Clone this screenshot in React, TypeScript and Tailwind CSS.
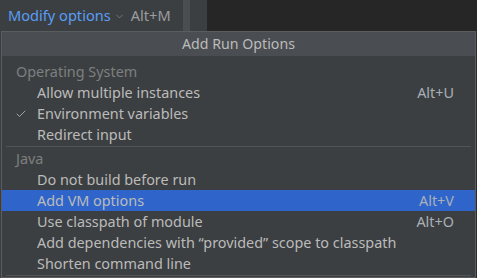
import { ChevronDown, Check } from "lucide-react";

type Item = { label: string; shortcut?: string; checked?: boolean; selected?: boolean };

const osItems: Item[] = [
  { label: "Allow multiple instances", shortcut: "Alt+U" },
  { label: "Environment variables", checked: true },
  { label: "Redirect input" },
];

const javaItems: Item[] = [
  { label: "Do not build before run" },
  { label: "Add VM options", shortcut: "Alt+V", selected: true },
  { label: "Use classpath of module", shortcut: "Alt+O" },
  { label: "Add dependencies with \u201cprovided\u201d scope to classpath" },
  { label: "Shorten command line" },
];

function Row({ item }: { item: Item }) {
  return (
    <div
      className={`h-[21px] flex items-center pr-[21px] ${
        item.selected ? "bg-[#2f65ca] text-[#bbbbbb]" : "text-[#bbbbbb]"
      }`}
    >
      <div className="w-[35px] flex justify-end pr-[10px]">
        {item.checked && <Check size={12} strokeWidth={1.6} className="text-[#bbbbbb]" />}
      </div>
      <span className="flex-1">{item.label}</span>
      {item.shortcut && <span className="text-[#a9b0b8]">{item.shortcut}</span>}
    </div>
  );
}

function Group({ title, items }: { title: string; items: Item[] }) {
  return (
    <div>
      <div className="h-[21px] flex items-center pl-[14px] text-[#7d7f80]">{title}</div>
      {items.map((it) => (
        <Row key={it.label} item={it} />
      ))}
    </div>
  );
}

export default function App() {
  return (
    <div
      className="w-[477px] h-[278px] overflow-hidden bg-[#2b2b2b] flex flex-col text-[14.4px]"
      style={{ fontFamily: '"Noto Sans", "DejaVu Sans", sans-serif' }}
    >
      {/* ツールバー */}
      <div className="h-[31px] flex shrink-0">
        <div className="w-[183px] bg-[#3c3f41] flex items-center pl-[8px] gap-[3px]">
          <span className="text-[#589df6] text-[14.6px]">Modify options</span>
          <ChevronDown size={11} strokeWidth={1.5} className="text-[#8b8e90] mt-[1px]" />
          <span className="text-[#9a9da0] text-[14.6px] ml-[3px]">Alt+M</span>
        </div>
        <div className="w-[7px] bg-[#4b4e50]" />
        <div className="w-[17px] bg-[#3c3f41]" />
        <div className="flex-1 bg-[#262626]" />
      </div>

      {/* ポップアップ */}
      <div className="flex flex-1">
        <div className="w-[1px] bg-[#3c3f41]" />
        <div className="w-[475px] border border-[#5a5d5f] bg-[#3c3f41] flex flex-col">
          <div className="h-[24px] bg-[#4a4d51] flex items-center justify-center text-[#bbbbbb] text-[14.2px]">
            Add Run Options
          </div>
          <div className="pt-[5px]">
            <Group title="Operating System" items={osItems} />
            <div className="h-[3px] flex items-center px-[4px]">
              <div className="h-px w-full bg-[#515457]" />
            </div>
            <Group title="Java" items={javaItems} />
            <div className="h-[3px] flex items-center px-[4px]">
              <div className="h-px w-full bg-[#515457]" />
            </div>
          </div>
        </div>
      </div>
    </div>
  );
}
